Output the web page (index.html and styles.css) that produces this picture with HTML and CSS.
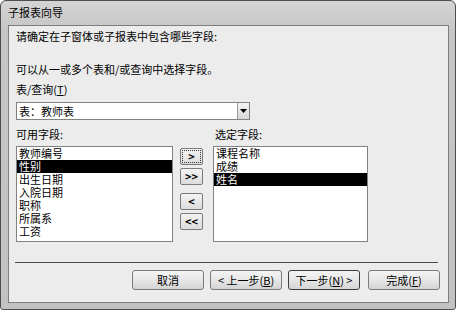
FILE: index.html
```html
<!DOCTYPE html>
<html lang="zh-CN">
<head>
    <meta charset="UTF-8">
    <meta name="viewport" content="width=device-width, initial-scale=1.0">
    <title>子报表向导</title>
    <link rel="stylesheet" href="styles.css">
</head>
<body>
  <div class="window">
    <div class="titlebar">子报表向导</div>

    <div class="panel">
      <p class="intro">请确定在子窗体或子报表中包含哪些字段:</p>
      <p class="hint">可以从一或多个表和/或查询中选择字段。</p>
      <p class="label">表/查询(<u>T</u>)</p>

      <div class="combo">
        <span class="combo-text">表：教师表</span>
        <span class="combo-drop">
          <svg width="7" height="4" viewBox="0 0 7 4"><path d="M0 0h7L3.5 4z" fill="#000"/></svg>
        </span>
      </div>

      <div class="field-labels">
        <span class="col-left">可用字段:</span>
        <span class="col-right">选定字段:</span>
      </div>

      <div class="pickers">
        <ul class="listbox left">
          <li>教师编号</li>
          <li class="selected">性别</li>
          <li>出生日期</li>
          <li>入院日期</li>
          <li>职称</li>
          <li>所属系</li>
          <li>工资</li>
        </ul>

        <div class="movers">
          <button class="mover focus">&gt;</button>
          <button class="mover">&gt;&gt;</button>
          <button class="mover group">&lt;</button>
          <button class="mover">&lt;&lt;</button>
        </div>

        <ul class="listbox right">
          <li>课程名称</li>
          <li>成绩</li>
          <li class="selected">姓名</li>
        </ul>
      </div>

      <div class="separator"></div>

      <div class="actions">
        <button class="btn">取消</button>
        <button class="btn">&lt; 上一步(<u>B</u>)</button>
        <button class="btn default">下一步(<u>N</u>) &gt;</button>
        <button class="btn finish">完成(<u>F</u>)</button>
      </div>
    </div>
  </div>
</body>
</html>
```

FILE: styles.css
```css
* {
    margin: 0;
    padding: 0;
    box-sizing: border-box;
}
body {
    background: #ffffff;
    font-family: "Noto Sans CJK SC", "Noto Sans", sans-serif;
    font-size: 11px;
    color: #000;
}
.window {
    width: 456px;
    height: 310px;
    border: 1px solid #4d4d4d;
    border-radius: 6px 6px 3px 3px;
    background: linear-gradient(#d4d4d4, #c6c6c6 30px, #c2c2c2);
    padding: 0 6px 6px 7px;
    display: flex;
    flex-direction: column;
}
.titlebar {
    height: 25px;
    line-height: 25px;
    margin-top: -1px;
}
.panel {
    flex: 1;
    background: #ececec;
    border: 1px solid #7d7d7d;
    padding: 0 8px 0 7px;
}
.intro {
    margin-top: 3px;
    line-height: 14px;
}
.hint {
    margin-top: 19px;
    line-height: 14px;
}
.label {
    margin-top: 6px;
    line-height: 14px;
}
.combo {
    margin-top: 6px;
    width: 234px;
    height: 18px;
    background: #fff;
    border: 1px solid #828282;
    display: flex;
    align-items: center;
    justify-content: space-between;
}
.combo-text {
    padding-left: 2px;
    line-height: 14px;
}
.combo-drop {
    width: 12px;
    height: 16px;
    border-left: 1px solid #9a9a9a;
    background: linear-gradient(#f4f4f4, #d6d6d6);
    display: flex;
    align-items: center;
    justify-content: center;
}
.field-labels {
    margin-top: 7px;
    display: flex;
    line-height: 14px;
}
.col-left {
    width: 199px;
}
.pickers {
    margin-top: 5px;
    display: flex;
    align-items: flex-start;
}
.listbox {
    list-style: none;
    height: 96px;
    background: #fff;
    border: 1px solid #828282;
}
.listbox.left {
    width: 157px;
}
.listbox.right {
    width: 155px;
    margin-left: 10px;
}
.listbox li {
    height: 13px;
    line-height: 13px;
    padding-left: 2px;
}
.listbox li.selected {
    background: #000;
    color: #fff;
}
.movers {
    margin-left: 7px;
    margin-top: 2px;
    display: flex;
    flex-direction: column;
    gap: 3px;
}
.mover {
    width: 23px;
    height: 17px;
    font-family: inherit;
    font-size: 11px;
    font-weight: bold;
    line-height: 13px;
    border: 1px solid #7a7a7a;
    border-radius: 2px;
    background: linear-gradient(#f3f3f3, #dcdcdc);
    color: #000;
}
.mover.focus {
    outline: 1px dotted #333;
    outline-offset: -3px;
}
.mover.group {
    margin-top: 5px;
}
.separator {
    margin-top: 20px;
    margin-right: 2px;
    margin-left: -1px;
    height: 1px;
    background: #4a4a4a;
}
.actions {
    margin-top: 7px;
    display: flex;
    justify-content: flex-end;
    gap: 6px;
}
.btn {
    width: 72px;
    height: 20px;
    font-family: inherit;
    font-size: 11px;
    border: 1px solid #7a7a7a;
    border-radius: 3px;
    background: linear-gradient(#f4f4f4, #e6e6e6 50%, #d4d4d4);
    color: #000;
}
.btn.default {
    border-color: #3c3c3c;
}
.btn.finish {
    margin-left: 2px;
}
```
